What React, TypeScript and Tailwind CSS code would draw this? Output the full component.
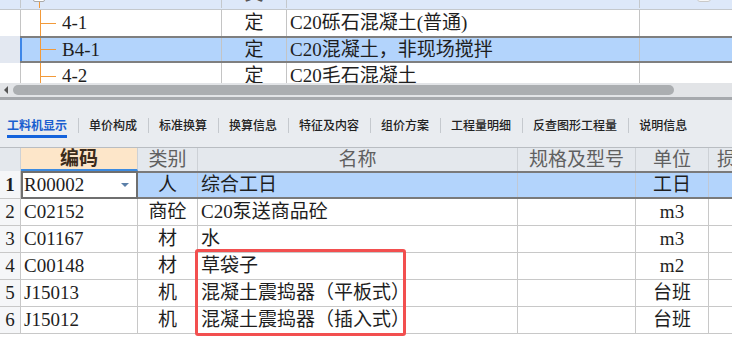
import React from "react";

type TopRow = { code: string; type: string; name: string; selected?: boolean };
type ItemRow = { no: number; code: string; cat: string; name: string; unit: string };

const topRows: TopRow[] = [
  { code: "4-1", type: "定", name: "C20砾石混凝土(普通)" },
  { code: "B4-1", type: "定", name: "C20混凝土，非现场搅拌", selected: true },
  { code: "4-2", type: "定", name: "C20毛石混凝土" },
];

const items: ItemRow[] = [
  { no: 1, code: "R00002", cat: "人", name: "综合工日", unit: "工日" },
  { no: 2, code: "C02152", cat: "商砼", name: "C20泵送商品砼", unit: "m3" },
  { no: 3, code: "C01167", cat: "材", name: "水", unit: "m3" },
  { no: 4, code: "C00148", cat: "材", name: "草袋子", unit: "m2" },
  { no: 5, code: "J15013", cat: "机", name: "混凝土震捣器（平板式）", unit: "台班" },
  { no: 6, code: "J15012", cat: "机", name: "混凝土震捣器（插入式）", unit: "台班" },
];

const tabs = [
  "工料机显示",
  "单价构成",
  "标准换算",
  "换算信息",
  "特征及内容",
  "组价方案",
  "工程量明细",
  "反查图形工程量",
  "说明信息",
];

const cellFont = "font-['Liberation_Serif','Noto_Sans_CJK_SC',serif] text-[19px] leading-[22px]";

function TopGrid() {
  return (
    <div className={`h-[83px] overflow-hidden bg-white text-[#1e1e1e] ${cellFont}`}>
      {/* header row, scrolled mostly out of view */}
      <div className="h-[10px] overflow-hidden border-b border-[#c4c8cc] bg-[#dde8f9]">
        <div className="-mt-[21px] flex h-[29px]">
          <div className="flex w-[20px] shrink-0 items-center justify-center text-[#444]">1</div>
          <div className="flex w-[202px] shrink-0 border-x border-[#c4c8cc]">
            <div className="ml-[12px] flex flex-col items-center self-end">
              <div className="h-[12px] w-[12px] rounded-[2px] border border-[#a9a9a9] bg-white" />
              <div className="h-[6px] w-px bg-[#f29a3a]" />
            </div>
          </div>
          <div className="flex w-[65px] shrink-0 items-center justify-center border-r border-[#c4c8cc] text-[#555]">
            类
          </div>
          <div className="w-[353px] shrink-0 border-r border-[#c4c8cc]" />
          <div className="flex flex-1 items-end pb-[6px] pl-[57px]">
            <div className="h-[14px] w-[14px] rounded-[3px] border border-[#c9c9c9] bg-[#f7f7f7]" />
          </div>
        </div>
      </div>
      {topRows.map((r) => (
        <div key={r.code} className={`flex ${r.selected ? "h-[27px]" : "h-[26px]"}`}>
          <div className={`w-[20px] shrink-0 ${r.selected ? "bg-[#e3e8f1]" : "bg-white"}`} />
          <div
            className={`flex flex-1 ${
              r.selected ? "border-y-2 border-[#7f7f7f] bg-[#b3d4fc]" : "bg-white"
            }`}
          >
            <div
              className={`flex w-[202px] shrink-0 border-r border-[#c4c4c4] ${
                r.selected ? "border-l-2 border-l-[#3d86e8]" : "border-l border-l-[#c4c4c4]"
              }`}
            >
              <div className={`w-px bg-[#f29a3a] ${r.selected ? "ml-[18px]" : "ml-[19px]"}`} />
              <div className="flex items-center">
                <div className="h-px w-[15px] bg-[#f29a3a]" />
                <span className="ml-[6px]">{r.code}</span>
              </div>
            </div>
            <div className="flex w-[65px] shrink-0 items-center justify-center border-r border-[#c4c4c4]">
              {r.type}
            </div>
            <div className="flex w-[353px] shrink-0 items-center border-r border-[#c4c4c4] pl-[3px]">
              {r.name}
            </div>
            <div className="flex-1" />
          </div>
        </div>
      ))}
    </div>
  );
}

function ScrollBar() {
  return (
    <div>
      <div className="flex h-[14px] items-center bg-[#e2e4e7]">
        <div className="ml-[4px] h-0 w-0 border-y-[4px] border-r-[4px] border-y-transparent border-r-[#555]" />
        <div className="ml-[5px] h-[10px] w-[661px] rounded-full bg-[#abaeb1]" />
      </div>
      <div className="h-[3px] bg-[#a6a9ad]" />
    </div>
  );
}

function TabBar() {
  return (
    <div className="flex h-[48px] items-start gap-[10.5px] border-b border-[#b9bdc2] bg-[#e9ecf0] pl-[7px] pt-[17px] font-['Noto_Sans_CJK_SC',sans-serif] text-[12px]">
      {tabs.map((t, i) => (
        <React.Fragment key={t}>
          {i > 0 && <div className="mt-[1px] h-[15px] w-px bg-[#c5c9ce]" />}
          <div className="flex flex-col">
            <span
              className={`leading-[16px] ${
                i === 0 ? "font-bold text-[#1a5fcf]" : "font-medium text-[#222]"
              }`}
            >
              {t}
            </span>
            {i === 0 && <div className="mt-[2px] h-[3px] bg-[#1463dc]" />}
          </div>
        </React.Fragment>
      ))}
    </div>
  );
}

function ItemGrid() {
  return (
    <div className={`bg-white text-[#1e1e1e] ${cellFont}`}>
      <div className="flex h-[23px] bg-[#e4e8ed] text-[#606060]">
        <div className="w-[21px] shrink-0 border-r border-[#cdd1d6]" />
        <div className="flex w-[117px] shrink-0 items-center justify-center border-b-2 border-r border-b-[#3d8be0] border-r-[#cdd1d6] bg-[#fde6c9] font-bold text-[#3b2b1b]">
          编码
        </div>
        <div className="flex w-[60px] shrink-0 items-center justify-center border-r border-[#cdd1d6]">
          类别
        </div>
        <div className="flex w-[320px] shrink-0 items-center justify-center border-r border-[#cdd1d6]">
          名称
        </div>
        <div className="flex w-[118px] shrink-0 items-center justify-center border-r border-[#cdd1d6]">
          规格及型号
        </div>
        <div className="flex w-[73px] shrink-0 items-center justify-center border-r border-[#cdd1d6]">
          单位
        </div>
        <div className="flex flex-1 items-center pl-[8px]">损</div>
      </div>

      {items.map((r) =>
        r.no === 1 ? (
          <div key={r.no} className="flex h-[28px]">
            <div className="flex w-[21px] shrink-0 items-center justify-center border-b border-r border-[#c8c8c8] bg-[#f5f6f8] font-bold">
              {r.no}
            </div>
            <div className="flex w-[117px] shrink-0 items-center justify-between border-2 border-[#6f6f6f] bg-white pl-[1px] pr-[7px]">
              <span>{r.code}</span>
              <div className="h-0 w-0 border-x-[4px] border-t-[4px] border-x-transparent border-t-[#5b7fa8]" />
            </div>
            <div className="flex flex-1 border-y-2 border-[#7a7a7a] bg-[#b3d4fc]">
              <div className="flex w-[60px] shrink-0 items-center justify-center border-r border-[#c0c8d4]">
                {r.cat}
              </div>
              <div className="flex w-[320px] shrink-0 items-center border-r border-[#c0c8d4] pl-[3px]">
                {r.name}
              </div>
              <div className="w-[118px] shrink-0 border-r border-[#c0c8d4]" />
              <div className="flex w-[73px] shrink-0 items-center justify-center border-r border-[#c0c8d4]">
                {r.unit}
              </div>
              <div className="flex-1" />
            </div>
          </div>
        ) : (
          <div key={r.no} className="flex h-[27px] border-b border-[#c8c8c8]">
            <div className="flex w-[21px] shrink-0 items-center justify-center border-r border-[#c8c8c8] bg-[#f5f6f8]">
              {r.no}
            </div>
            <div className="flex w-[117px] shrink-0 items-center border-r border-[#c8c8c8] pl-[3px]">
              {r.code}
            </div>
            <div className="flex w-[60px] shrink-0 items-center justify-center border-r border-[#c8c8c8]">
              {r.cat}
            </div>
            <div className="flex w-[320px] shrink-0 items-center border-r border-[#c8c8c8] pl-[3px]">
              {r.name}
            </div>
            <div className="w-[118px] shrink-0 border-r border-[#c8c8c8]" />
            <div className="flex w-[73px] shrink-0 items-center justify-center border-r border-[#c8c8c8]">
              {r.unit}
            </div>
            <div className="flex-1" />
          </div>
        )
      )}
    </div>
  );
}

export default function App() {
  return (
    <div className="relative h-[345px] w-[732px] overflow-hidden bg-white">
      <TopGrid />
      <ScrollBar />
      <TabBar />
      <ItemGrid />
      {/* highlight box drawn over the material rows */}
      <div className="pointer-events-none absolute left-[195px] top-[249px] h-[87px] w-[211px] rounded-[3px] border-[3px] border-[#f24f4f]" />
    </div>
  );
}
